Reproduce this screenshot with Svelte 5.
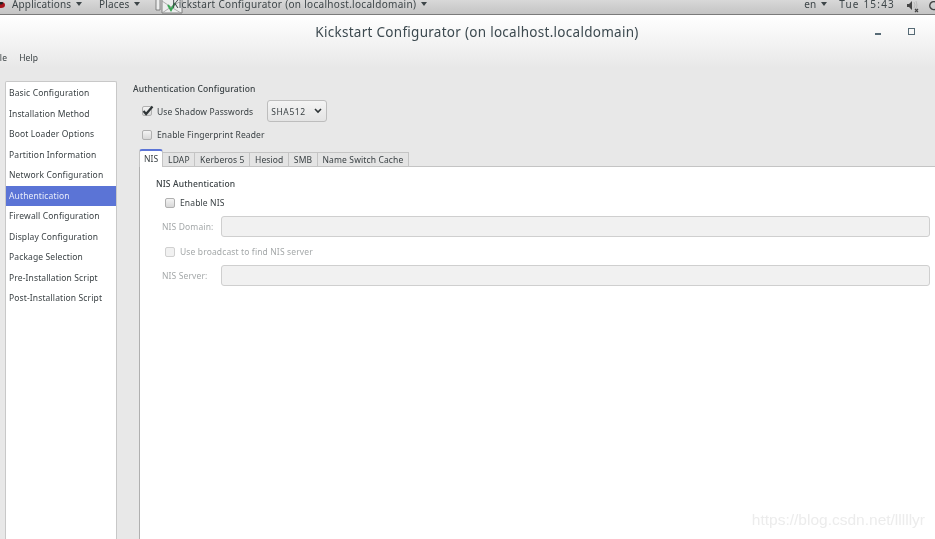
<script lang="ts">
	const sections = [
		'Basic Configuration',
		'Installation Method',
		'Boot Loader Options',
		'Partition Information',
		'Network Configuration',
		'Authentication',
		'Firewall Configuration',
		'Display Configuration',
		'Package Selection',
		'Pre-Installation Script',
		'Post-Installation Script'
	];
	const tabs = ['NIS', 'LDAP', 'Kerberos 5', 'Hesiod', 'SMB', 'Name Switch Cache'];
	let active = 'Authentication';
</script>

<div class="screen">
	<header class="panel">
		<svg class="logo" width="8" height="10" viewBox="0 0 8 10">
			<ellipse cx="1" cy="3" rx="4" ry="3" fill="#a8141c" />
			<ellipse cx="0" cy="1" rx="3" ry="1.5" fill="#222" />
		</svg>
		<span class="panel-item apps">Applications <i class="caret"></i></span>
		<span class="panel-item places">Places <i class="caret"></i></span>
		<svg class="app-icon" width="28" height="14" viewBox="0 0 28 14">
			<path d="M1 0v10h4V0M7 0v13h20V0" fill="#eceded" stroke="#6b6b6b" stroke-width="0.8" />
			<path d="M7 1l9 6 10-6M7 13l9-6 10 6" fill="none" stroke="#9a9a9a" stroke-width="0.8" />
			<path d="M13 5l3 5 4-7" fill="none" stroke="#3aa655" stroke-width="2" />
		</svg>
		<span class="panel-item window-name">Kickstart Configurator (on localhost.localdomain) <i class="caret"></i></span>
		<span class="spacer"></span>
		<span class="panel-item lang">en <i class="caret"></i></span>
		<span class="panel-item clock">Tue 15:43</span>
		<svg class="volume" width="12" height="12" viewBox="0 0 12 12">
			<path d="M0 3h2l3-3v9L2 6H0z" fill="#444" />
			<path d="M7 1q2 3 0 6M9 0q2 4 0 8" fill="none" stroke="#bbb" />
			<path d="M8 8l3 3M11 8l-3 3" stroke="#444" stroke-width="1.2" />
		</svg>
		<svg class="power" width="10" height="12" viewBox="0 0 10 12">
			<path d="M7 0.8a4 4 0 1 0 2.8 3.7" fill="none" stroke="#444" stroke-width="1.4" />
		</svg>
	</header>

	<div class="titlebar-wrap">
		<div class="titlebar">
			<h1>Kickstart Configurator (on localhost.localdomain)</h1>
			<div class="window-buttons">
				<span class="minimize"></span>
				<span class="maximize"></span>
			</div>
		</div>
		<nav class="menubar">
			<span class="file">File</span>
			<span>Help</span>
		</nav>
	</div>

	<main class="content">
		<ul class="sidebar">
			{#each sections as section}
				<li class:active={section === active}>{section}</li>
			{/each}
		</ul>

		<section class="auth">
			<h2>Authentication Configuration</h2>
			<div class="shadow-row">
				<label class="check">
					<span class="box">
						<svg width="13" height="12" viewBox="0 0 13 12">
							<path d="M2.5 6l2.6 3L11.5 1.5" fill="none" stroke="#2e3436" stroke-width="2.2" />
						</svg>
					</span>
					Use Shadow Passwords
				</label>
				<div class="select">SHA512
					<svg width="8" height="6" viewBox="0 0 8 6">
						<path d="M1 1l3 3 3-3" fill="none" stroke="#2e3436" stroke-width="1.6" />
					</svg>
				</div>
			</div>
			<label class="check fingerprint"><span class="box"></span>Enable Fingerprint Reader</label>

			<div class="notebook">
				<div class="tabs">
					{#each tabs as tab, i}
						<span class="tab" class:current={i === 0}>{tab}</span>
					{/each}
				</div>
				<div class="page">
					<h3>NIS Authentication</h3>
					<label class="check enable"><span class="box"></span>Enable NIS</label>
					<div class="field disabled">
						<span class="field-label">NIS Domain:</span>
						<div class="entry"></div>
					</div>
					<label class="check broadcast disabled"><span class="box"></span>Use broadcast to find NIS server</label>
					<div class="field disabled">
						<span class="field-label">NIS Server:</span>
						<div class="entry"></div>
					</div>
				</div>
			</div>
		</section>
	</main>

	<div class="watermark">https://blog.csdn.net/lllllyr</div>
</div>

<style>
	:global(body) {
		margin: 0;
	}
	.screen {
		position: relative;
		display: flex;
		flex-direction: column;
		width: 935px;
		height: 539px;
		overflow: hidden;
		background: #e8e8e8;
		color: #3a4144;
		font-family: 'Noto Sans', sans-serif;
		font-size: 8.5px;
		letter-spacing: 0.13px;
		filter: blur(0.3px);
	}
	.panel {
		display: flex;
		align-items: center;
		flex: none;
		height: 15px;
		box-sizing: border-box;
		padding-bottom: 6px;
		background: linear-gradient(#d8d8d8, #c4c4c4);
		border-bottom: 1px solid #7a7a7a;
		font-size: 10px;
		letter-spacing: 0.15px;
		color: #3d4548;
		overflow: hidden;
	}
	.logo {
		flex: none;
		margin-top: 6px;
	}
	.panel-item {
		flex: none;
		white-space: nowrap;
	}
	.apps {
		margin-left: 4px;
	}
	.places {
		margin-left: 17px;
	}
	.app-icon {
		flex: none;
		margin: 6px -11px 0 15px;
	}
	.window-name {
		letter-spacing: 0.3px;
	}
	.spacer {
		flex: 1;
	}
	.clock {
		margin-left: 12px;
		letter-spacing: 1.2px;
	}
	.volume {
		flex: none;
		margin: 6px 0 0 12px;
	}
	.power {
		flex: none;
		margin: 6px -3px 0 9px;
	}
	.caret {
		display: inline-block;
		width: 0;
		height: 0;
		margin-left: 2px;
		vertical-align: 2px;
		border-left: 3.5px solid transparent;
		border-right: 3.5px solid transparent;
		border-top: 4px solid #3d4548;
	}
	.titlebar-wrap {
		flex: none;
		background: linear-gradient(#ffffff, #e8e8e8);
	}
	.titlebar {
		display: flex;
		align-items: center;
		justify-content: center;
		position: relative;
		height: 33px;
		padding-left: 19px;
	}
	h1 {
		margin: 0;
		font-size: 13.5px;
		font-weight: 400;
		letter-spacing: 0.28px;
		color: #3d4a50;
	}
	.window-buttons {
		position: absolute;
		top: 13px;
		right: 20px;
		display: flex;
		align-items: flex-end;
		gap: 27px;
	}
	.minimize {
		width: 6px;
		height: 2px;
		background: #566a75;
	}
	.maximize {
		width: 5px;
		height: 5px;
		border: 1.5px solid #566a75;
	}
	.menubar {
		display: flex;
		gap: 12px;
		height: 20px;
		margin-left: -7px;
		padding-top: 3px;
		box-sizing: border-box;
		line-height: 13px;
	}
	.content {
		display: flex;
		flex: 1;
		min-height: 0;
		padding: 13px 0 0 5px;
		margin-top: 0;
	}
	.sidebar {
		flex: none;
		width: 110px;
		margin: 0;
		padding: 1px 0 0;
		list-style: none;
		background: #fff;
		border: 1px solid #c8c8c8;
		border-bottom: 0;
		border-radius: 2px 2px 0 0;
	}
	.sidebar li {
		height: 20.5px;
		line-height: 20.5px;
		padding-left: 3px;
		white-space: nowrap;
	}
	.sidebar li.active {
		background: #5b74d6;
		color: #e8ecfa;
	}
	.auth {
		display: flex;
		flex-direction: column;
		flex: 1;
		min-width: 0;
		padding-left: 16px;
	}
	h2,
	h3 {
		margin: 0;
		font-size: 8.5px;
		font-weight: 500;
		line-height: 14px;
	}
	h2 {
		margin-top: 1px;
	}
	.check {
		display: flex;
		align-items: center;
		gap: 5px;
		white-space: nowrap;
	}
	.box {
		display: flex;
		align-items: center;
		justify-content: center;
		box-sizing: border-box;
		width: 10px;
		height: 10px;
		border: 1px solid #b0b0b0;
		border-radius: 2px;
		background: linear-gradient(#f4f4f4, #d8d8d8);
		flex: none;
	}
	.box svg {
		flex: none;
	}
	.shadow-row {
		display: flex;
		align-items: center;
		gap: 14px;
		height: 22px;
		margin: 4px 0 0 9px;
	}
	.select {
		display: flex;
		align-items: center;
		justify-content: space-between;
		box-sizing: border-box;
		width: 60px;
		height: 22px;
		padding: 0 4px 0 3px;
		background: linear-gradient(#f4f4f4, #e4e4e4);
		border: 1px solid #bdbdbd;
		border-radius: 3px;
		letter-spacing: 0.6px;
	}
	.fingerprint {
		margin: 6px 0 0 9px;
		height: 13px;
	}
	.notebook {
		display: flex;
		flex-direction: column;
		flex: 1;
		margin: 7px 0 0 6px;
		min-height: 0;
	}
	.tabs {
		display: flex;
		flex: none;
		align-items: flex-end;
		height: 18px;
	}
	.tab {
		box-sizing: border-box;
		height: 14px;
		line-height: 13px;
		padding: 0 4.7px;
		background: #e4e4e4;
		border: 1px solid #c4c4c4;
		border-left: 0;
		border-bottom: 0;
		white-space: nowrap;
	}
	.tab.current {
		position: relative;
		z-index: 1;
		height: 18px;
		line-height: 16px;
		margin-bottom: -1px;
		padding: 0 4px;
		background: #fff;
		border: 1px solid #c4c4c4;
		border-top: 2px solid #5b74d6;
		border-bottom: 0;
		border-radius: 3px 3px 0 0;
	}
	.page {
		flex: 1;
		box-sizing: border-box;
		padding: 10px 5px 0 16px;
		background: #fff;
		border-top: 1px solid #c4c4c4;
		border-left: 1px solid #b0b0b0;
	}
	.enable {
		height: 13px;
		margin: 5px 0 0 9px;
	}
	.field {
		display: flex;
		align-items: center;
		height: 21px;
		margin-top: 7px;
		padding-left: 6px;
	}
	.field-label {
		flex: none;
		width: 59px;
	}
	.entry {
		flex: 1;
		height: 21px;
		box-sizing: border-box;
		background: #f1f1f1;
		border: 1px solid #cfcfcf;
		border-radius: 3px;
	}
	.broadcast {
		height: 13px;
		margin: 8px 0 0 9px;
	}
	.disabled {
		color: #a4a8a9;
	}
	.disabled .box {
		background: #f1f1f1;
		border-color: #d0d0d0;
	}
	.watermark {
		position: absolute;
		right: 10px;
		bottom: 10px;
		font-family: 'Liberation Sans', sans-serif;
		font-size: 15.5px;
		letter-spacing: 0;
		color: #ececec;
	}
</style>
